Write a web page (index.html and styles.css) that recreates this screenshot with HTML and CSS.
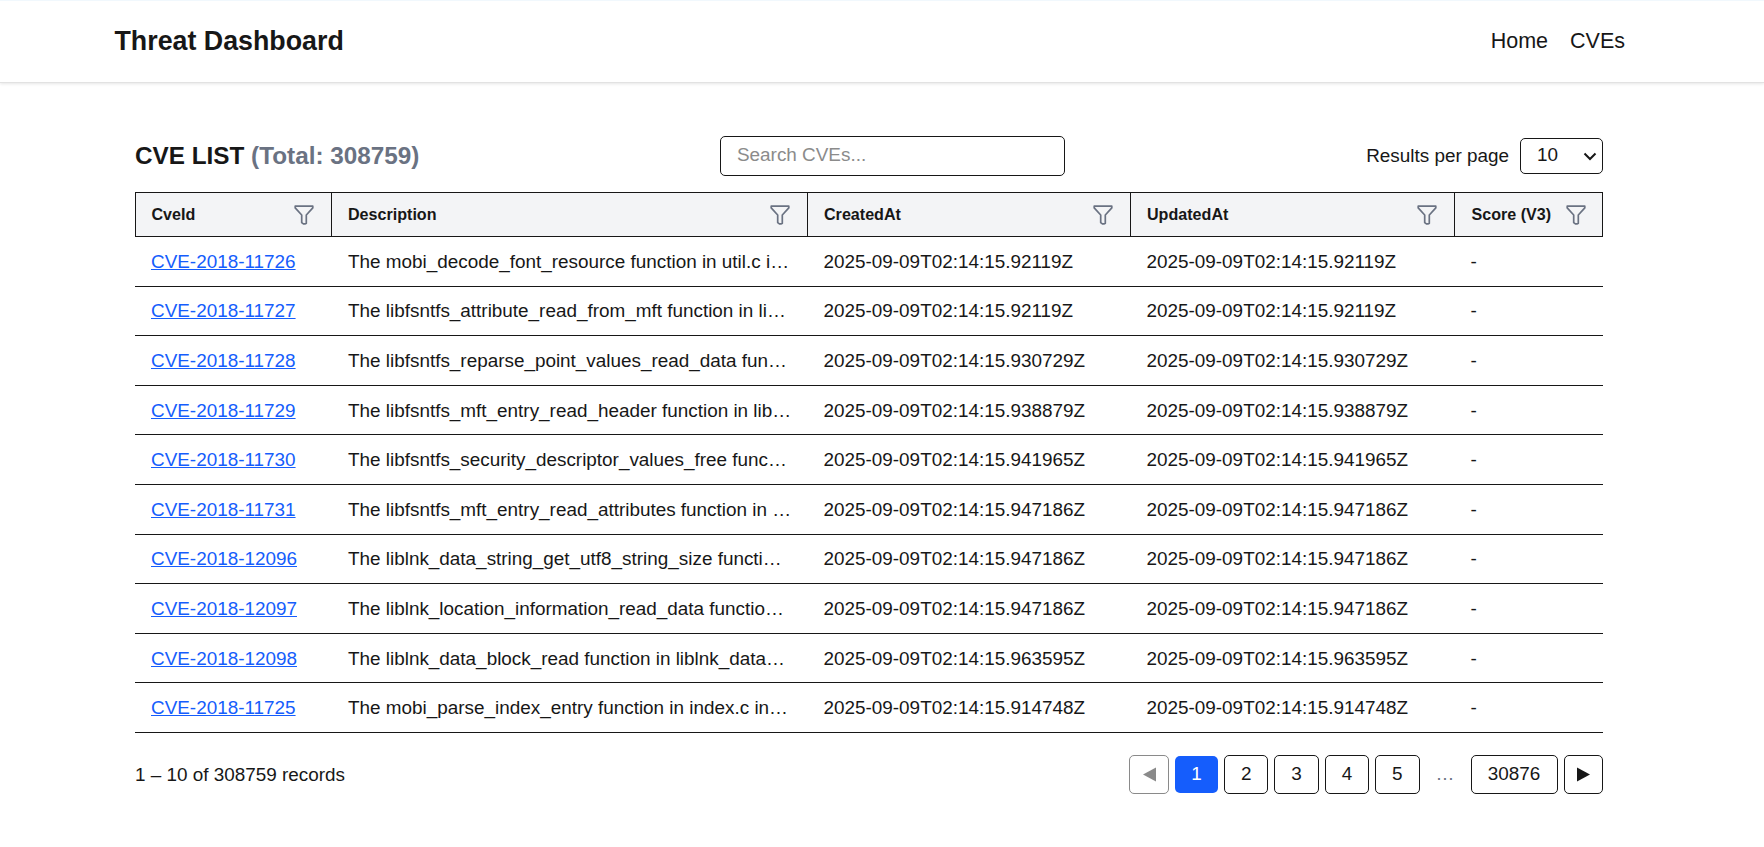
FILE: index.html
```html
<!DOCTYPE html>
<html lang="en">
<head>
<meta charset="utf-8">
<title>Threat Dashboard</title>
<link rel="stylesheet" href="styles.css">
</head>
<body>
<svg width="0" height="0" class="defs"><symbol id="funnel" viewBox="0 0 20 20"><path d="M1.2 1.2h17.600v1.700L12.300 10v8.200l-1 .7H9.400L7.700 17.600V10L1.200 2.900z"/></symbol></svg>
<header class="navbar">
  <div class="brand">Threat Dashboard</div>
  <nav class="links"><a>Home</a><a>CVEs</a></nav>
</header>
<main class="page">
  <div class="toolbar">
    <h1 class="heading">CVE LIST <span class="total">(Total: 308759)</span></h1>
    <input class="search" placeholder="Search CVEs...">
    <div class="per-page"><span class="per-page-label">Results per page</span>
      <div class="select"><span>10</span><svg class="chevron" viewBox="0 0 14 9"><path d="M1.5 1.5 7 7l5.500-5.500"/></svg></div>
    </div>
  </div>
  <table class="cves">
    <colgroup><col class="c-id"><col class="c-desc"><col class="c-created"><col class="c-updated"><col class="c-score"></colgroup>
    <thead><tr>
      <th><div class="th"><span>CveId</span><svg class="funnel"><use href="#funnel"/></svg></div></th>
      <th><div class="th"><span>Description</span><svg class="funnel"><use href="#funnel"/></svg></div></th>
      <th><div class="th"><span>CreatedAt</span><svg class="funnel"><use href="#funnel"/></svg></div></th>
      <th><div class="th"><span>UpdatedAt</span><svg class="funnel"><use href="#funnel"/></svg></div></th>
      <th><div class="th"><span>Score (V3)</span><svg class="funnel"><use href="#funnel"/></svg></div></th>
    </tr></thead>
    <tbody>
      <tr><td><a>CVE-2018-11726</a></td><td>The mobi_decode_font_resource function in util.c i…</td><td>2025-09-09T02:14:15.92119Z</td><td>2025-09-09T02:14:15.92119Z</td><td>-</td></tr>
      <tr><td><a>CVE-2018-11727</a></td><td>The libfsntfs_attribute_read_from_mft function in li…</td><td>2025-09-09T02:14:15.92119Z</td><td>2025-09-09T02:14:15.92119Z</td><td>-</td></tr>
      <tr><td><a>CVE-2018-11728</a></td><td>The libfsntfs_reparse_point_values_read_data fun…</td><td>2025-09-09T02:14:15.930729Z</td><td>2025-09-09T02:14:15.930729Z</td><td>-</td></tr>
      <tr><td><a>CVE-2018-11729</a></td><td>The libfsntfs_mft_entry_read_header function in lib…</td><td>2025-09-09T02:14:15.938879Z</td><td>2025-09-09T02:14:15.938879Z</td><td>-</td></tr>
      <tr><td><a>CVE-2018-11730</a></td><td>The libfsntfs_security_descriptor_values_free func…</td><td>2025-09-09T02:14:15.941965Z</td><td>2025-09-09T02:14:15.941965Z</td><td>-</td></tr>
      <tr><td><a>CVE-2018-11731</a></td><td>The libfsntfs_mft_entry_read_attributes function in …</td><td>2025-09-09T02:14:15.947186Z</td><td>2025-09-09T02:14:15.947186Z</td><td>-</td></tr>
      <tr><td><a>CVE-2018-12096</a></td><td>The liblnk_data_string_get_utf8_string_size functi…</td><td>2025-09-09T02:14:15.947186Z</td><td>2025-09-09T02:14:15.947186Z</td><td>-</td></tr>
      <tr><td><a>CVE-2018-12097</a></td><td>The liblnk_location_information_read_data functio…</td><td>2025-09-09T02:14:15.947186Z</td><td>2025-09-09T02:14:15.947186Z</td><td>-</td></tr>
      <tr><td><a>CVE-2018-12098</a></td><td>The liblnk_data_block_read function in liblnk_data…</td><td>2025-09-09T02:14:15.963595Z</td><td>2025-09-09T02:14:15.963595Z</td><td>-</td></tr>
      <tr><td><a>CVE-2018-11725</a></td><td>The mobi_parse_index_entry function in index.c in…</td><td>2025-09-09T02:14:15.914748Z</td><td>2025-09-09T02:14:15.914748Z</td><td>-</td></tr>
    </tbody>
  </table>
  <div class="footer">
    <span class="records">1 – 10 of 308759 records</span>
    <div class="pager">
      <button class="arrow disabled"><svg class="tri" viewBox="0 0 13 14"><path d="M13 0v14L0 7z"/></svg></button>
      <button class="current">1</button>
      <button>2</button><button>3</button><button>4</button><button>5</button>
      <span class="gap">…</span>
      <button class="last">30876</button>
      <button class="arrow"><svg class="tri" viewBox="0 0 13 14"><path d="M0 0v14l13-7z"/></svg></button>
    </div>
  </div>
</main>
</body>
</html>
```
FILE: styles.css
```css
* { box-sizing: border-box; }
body { margin: 0; background: #fff; color: #171717; font: 18.9px/28px "Liberation Sans", Arial, sans-serif; overflow: hidden; }
.defs { display: block; }
.navbar { display: flex; align-items: center; justify-content: space-between; height: 83px; padding: 0 139px 2px 114.5px; border-top: 1px solid #f1f8fd; border-bottom: 1px solid #e2e2e2; box-shadow: 0 1px 3px rgba(0,0,0,.1); }
.brand { font-size: 26.8px; font-weight: 700; }
.links { display: flex; gap: 22px; font-size: 21.5px; }
.page { width: 1468px; margin: 53px 0 0 135px; }
.toolbar { display: grid; grid-template-columns: 585px 345px 1fr; align-items: center; height: 40px; }
.heading { margin: 0; font-size: 24.3px; font-weight: 700; }
.total { color: #6a7282; }
.search { height: 40px; padding: 0 16px 3px; border: 1px solid #171717; border-radius: 5px; font: inherit; background: #fff; }
.search::placeholder { color: #8b8b8b; opacity: 1; }
.per-page { display: flex; align-items: center; justify-content: flex-end; gap: 11px; }
.select { display: flex; align-items: center; justify-content: space-between; width: 83px; height: 36px; padding: 0 5px 2px 16px; border: 1px solid #171717; border-radius: 5px; }
.chevron { width: 14px; height: 9px; margin-top: 3px; fill: none; stroke: #171717; stroke-width: 2; }
.cves { width: 1468px; margin-top: 16px; border-collapse: separate; border-spacing: 0; table-layout: fixed; }
.c-id { width: 197px; }
.c-desc { width: 476px; }
.c-created { width: 323px; }
.c-updated { width: 324px; }
.c-score { width: 148px; }
.cves th { height: 45px; padding: 0 17px 0 16px; border: 1px solid #171717; border-left: 0; background: #f3f4f6; font-size: 16.1px; text-align: left; }
.cves th:first-child { padding-left: 15.5px; border-left: 1px solid #171717; }
.cves th:last-child { padding-right: 16px; padding-left: 16.5px; }
.th { display: flex; align-items: center; justify-content: space-between; }
.th span { padding-bottom: 2px; }
.funnel { width: 20px; height: 20px; fill: none; stroke: #6a7282; stroke-width: 1.7; stroke-linejoin: round; }
.cves td { height: 49.6px; padding: 1px 0 0 15.5px; border-bottom: 1px solid #171717; white-space: nowrap; }
.cves td:first-child, .cves td:nth-child(2) { padding-left: 16px; }
.cves a { color: #155dfc; text-decoration: underline; }
.footer { display: flex; align-items: center; justify-content: space-between; margin-top: 22px; height: 39px; }
.records { padding-top: 1px; }
.pager { display: flex; align-items: center; gap: 6px; }
.pager button { display: flex; align-items: center; justify-content: center; width: 44.4px; height: 39px; padding: 0; border: 1px solid #171717; border-radius: 5px; background: #fff; color: #171717; font: inherit; }
.pager .arrow { width: 39.5px; }
.pager .disabled { opacity: .5; }
.pager .current { width: 43px; height: 37px; border: 0; background: #155dfc; color: #fff; }
.pager .last { width: 87px; }
.gap { width: 39px; text-align: center; color: #6a7282; }
.tri { width: 13px; height: 15px; fill: #171717; }
```
